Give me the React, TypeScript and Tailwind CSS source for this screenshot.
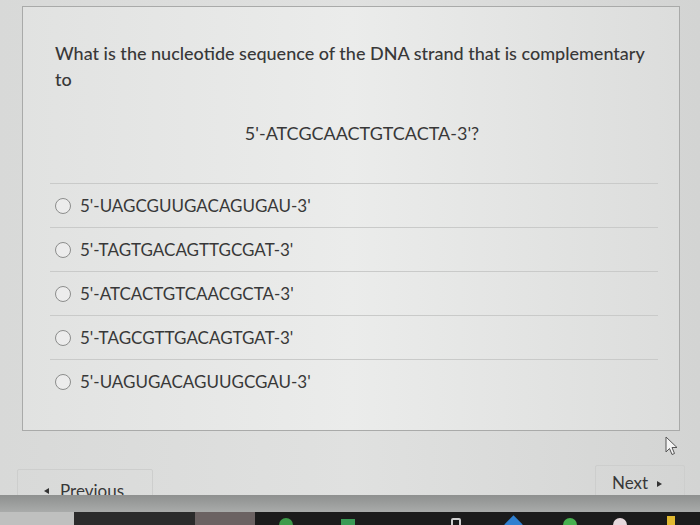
import React from "react";

const options = [
  "5'-UAGCGUUGACAGUGAU-3'",
  "5'-TAGTGACAGTTGCGAT-3'",
  "5'-ATCACTGTCAACGCTA-3'",
  "5'-TAGCGTTGACAGTGAT-3'",
  "5'-UAGUGACAGUUGCGAU-3'",
];

const Cursor = () => (
  <svg width="14" height="20" viewBox="0 0 14 20" className="absolute left-[665px] top-[436px]">
    <path d="M1 1 L1 16 L4.5 12.5 L7 18.5 L9.5 17.5 L7 11.5 L12 11.5 Z" fill="#f4f4f4" stroke="#555" strokeWidth="1" strokeLinejoin="round" />
  </svg>
);

const App = () => {
  return (
    <div className="w-[700px] h-[525px] flex flex-col overflow-hidden font-['Lato','Liberation_Sans',sans-serif] text-[#383838]">
      {/* screen */}
      <div className="relative h-[495px] overflow-hidden bg-gradient-to-r from-[#d8d9d8] via-[#e0e1e0] to-[#d3d4d3]">
        {/* question card */}
        <div className="mt-[6px] ml-[22px] w-[658px] h-[425px] border border-[#a9aaa9] bg-gradient-to-r from-[#e1e2e1] via-[#ebeceb] to-[#dcdddc] pl-[27px] pt-[33px]">
          <p className="ml-[5px] mr-[20px] text-[18px] leading-[26px] font-medium">
            What is the nucleotide sequence of the DNA strand that is complementary to
          </p>
          <p className="mt-[28px] pl-[16px] mr-[21px] text-center text-[18px] leading-[26px]">
            5'-ATCGCAACTGTCACTA-3'?
          </p>
          <div className="mt-[37px] mr-[21px]">
            {options.map((o) => (
              <div key={o} className="h-[44px] border-t border-[#c9cac9] flex items-center pl-[5px] gap-[9px]">
                <span className="w-[16px] h-[16px] rounded-full border border-[#8c8d8c] bg-[#ececec]" />
                <span className="text-[17px]">{o}</span>
              </div>
            ))}
          </div>
        </div>

        {/* nav buttons */}
        <div className="flex justify-between items-start mt-[34px] pl-[17px] pr-[15px]">
          <div className="mt-[4px] w-[136px] h-[44px] border border-[#cdcecd] rounded-[2px] flex items-start pt-[11px] pl-[26px] gap-[11px]">
            <span className="mt-[7px] w-0 h-0 border-y-[3px] border-y-transparent border-r-[5px] border-r-[#333]" />
            <span className="text-[17px] leading-[20px]">Previous</span>
          </div>
          <div className="w-[90px] h-[46px] border border-[#cdcecd] rounded-[2px] flex items-start pt-[7px] pl-[16px] gap-[9px]">
            <span className="text-[17px] leading-[20px]">Next</span>
            <span className="mt-[8px] w-0 h-0 border-y-[3px] border-y-transparent border-l-[5px] border-l-[#333]" />
          </div>
        </div>

        <Cursor />
      </div>

      {/* monitor edge */}
      <div className="h-[17px] bg-gradient-to-b from-[#8e908f] to-[#a9abaa]" />

      {/* taskbar */}
      <div className="h-[13px] flex bg-[#1b1b1b]">
        <div className="w-[74px] bg-[#bfc0bf]" />
        <div className="w-[121px] bg-[#2b2b2b]" />
        <div className="w-[60px] bg-[#6b6262]" />
        <div className="flex-1 relative">
          <span className="absolute left-[24px] top-[6px] w-[14px] h-[14px] rounded-full bg-[#3e9a4a]" />
          <span className="absolute left-[86px] top-[7px] w-[14px] h-[12px] bg-[#3a9a55]" />
          <span className="absolute left-[196px] top-[6px] w-[10px] h-[10px] rounded-[2px] border-2 border-[#cfcfcf]" />
          <span className="absolute left-[252px] top-[6px] w-[13px] h-[13px] rotate-45 bg-[#2f7fd0]" />
          <span className="absolute left-[308px] top-[6px] w-[14px] h-[14px] rounded-full bg-[#47b04f]" />
          <span className="absolute left-[358px] top-[6px] w-[14px] h-[14px] rounded-full bg-[#e6d8dc]" />
          <span className="absolute left-[412px] top-[4px] w-[8px] h-[10px] bg-[#e0b830]" />
        </div>
      </div>
    </div>
  );
};

export default App;
